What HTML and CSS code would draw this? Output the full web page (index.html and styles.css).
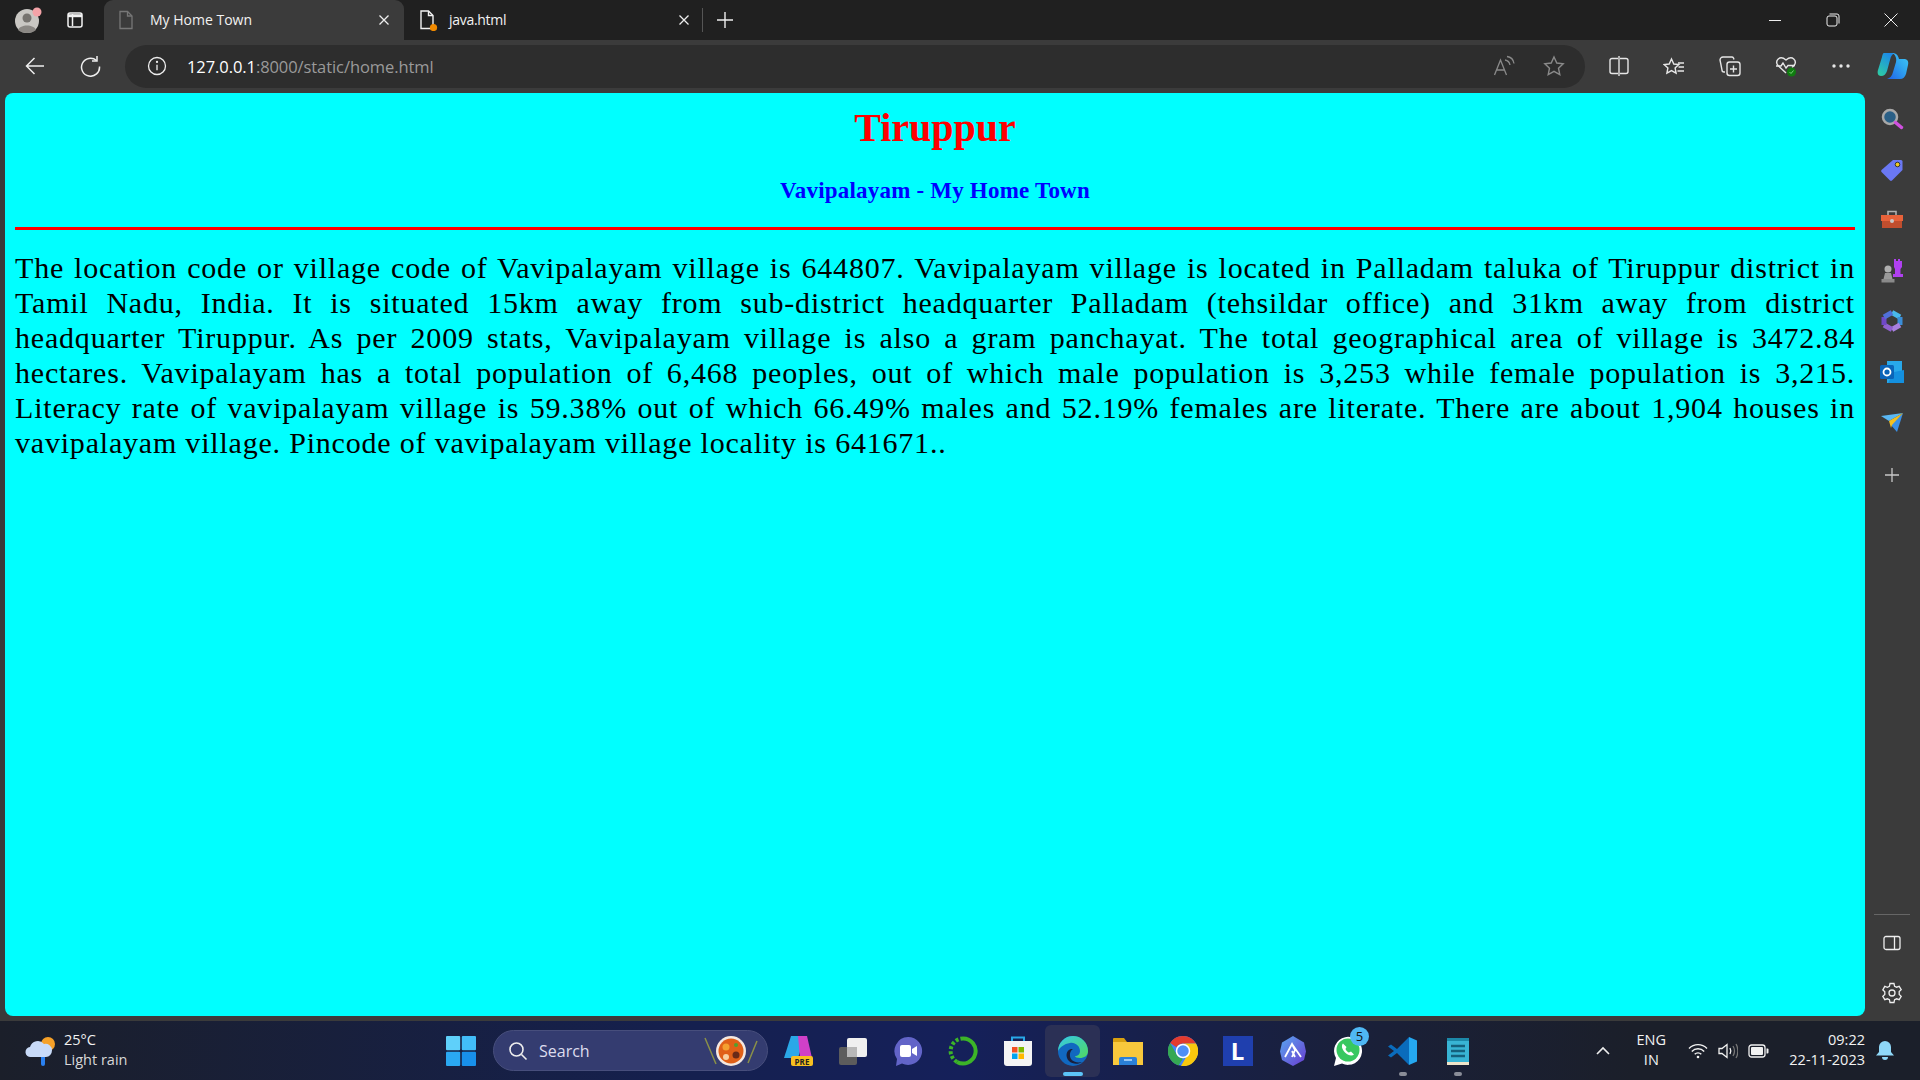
FILE: index.html
```html
<!DOCTYPE html>
<html lang="en">
<head>
    <meta charset="UTF-8">
    <title>My Home Town</title>
    <link rel="stylesheet" href="styles.css">
</head>
<body>
    <div class="tabbar">
        <div class="profile">
            <svg width="30" height="30" viewBox="0 0 30 30"><circle cx="14" cy="16" r="12" fill="#c9c7c3"/><circle cx="14" cy="13" r="4.5" fill="#76736f"/><path d="M5 25c2-6 16-6 18 0-4 4-14 4-18 0z" fill="#8b8884"/><circle cx="24" cy="7" r="4.5" fill="#f4a3a8"/></svg>
        </div>
        <div class="tabs-toggle">
            <svg width="18" height="18" viewBox="0 0 18 18" fill="none" stroke="#f2f2f2" stroke-width="1.5"><rect x="2" y="2" width="14" height="14" rx="2"/><path d="M6.5 3v12"/><path d="M2 4.7h14" stroke-width="3"/></svg>
        </div>
        <div class="tab tab-active">
            <svg width="16" height="20" viewBox="0 0 16 20" fill="none" stroke="#777" stroke-width="1.3"><path d="M2 1.5h7.5l4.5 4.5v12.500h-12z"/><path d="M9.5 1.5V6H14"/></svg>
            <span class="tab-title">My Home Town</span>
            <svg class="tab-close" width="12" height="12" viewBox="0 0 12 12" stroke="#eee" stroke-width="1.3"><path d="M1.5 1.5l9 9M10.5 1.5l-9 9"/></svg>
        </div>
        <div class="tab tab-other">
            <svg width="20" height="22" viewBox="0 0 20 22" fill="none" stroke="#f2f2f2" stroke-width="1.4"><path d="M3 2h7.5L15 6.500v13H3z"/><path d="M10.5 2v4.500H15"/><circle cx="15.5" cy="18.500" r="3.600" fill="#f08a00" stroke="none"/></svg>
            <span class="tab-title">java.html</span>
            <svg class="tab-close" width="12" height="12" viewBox="0 0 12 12" stroke="#eee" stroke-width="1.3"><path d="M1.5 1.5l9 9M10.5 1.5l-9 9"/></svg>
        </div>
        <div class="tab-divider"></div>
        <svg class="new-tab" width="18" height="18" viewBox="0 0 18 18" stroke="#eee" stroke-width="1.4"><path d="M9 1v16M1 9h16"/></svg>
        <div class="window-controls">
            <svg width="14" height="14" viewBox="0 0 14 14" stroke="#eee" stroke-width="1"><path d="M1 7.500h12"/></svg>
            <svg width="14" height="14" viewBox="0 0 14 14" fill="none" stroke="#eee" stroke-width="1"><rect x="1" y="3" width="10" height="10" rx="2"/><path d="M3.500 1H11a2 2 0 0 1 2 2v7.500"/></svg>
            <svg width="14" height="14" viewBox="0 0 14 14" stroke="#eee" stroke-width="1"><path d="M.5.5l13 13M13.500.5l-13 13"/></svg>
        </div>
    </div>

    <div class="toolbar">
        <svg class="nav-icon" width="22" height="22" viewBox="0 0 22 22" fill="none" stroke="#eee" stroke-width="1.5"><path d="M20 11H2.500M10.500 3l-8 8 8 8"/></svg>
        <svg class="nav-icon" width="22" height="22" viewBox="0 0 22 22" fill="none" stroke="#eee" stroke-width="1.5"><path d="M17.500 5.500a9 9 0 1 0 3 6"/><path d="M18 1v5h-5"/></svg>
        <div class="address-bar">
            <svg width="20" height="20" viewBox="0 0 20 20" fill="none" stroke="#eee" stroke-width="1.3"><circle cx="10" cy="10" r="8.500"/><path d="M10 8.800v5.500"/><circle cx="10" cy="5.900" r=".5"/></svg>
            <span class="url"><span class="url-host">127.0.0.1</span>:8000/static/home.html</span>
            <svg class="address-icon" width="22" height="22" viewBox="0 0 22 22" fill="none" stroke="#8a8a8a" stroke-width="1.3"><path d="M1.500 20l6-15 6 15M3.500 15h8"/><path d="M12 5c3 .5 4.500 2 5 5M14 1.500c4 .5 6.500 3.500 7 7"/></svg>
            <svg class="address-icon" width="22" height="22" viewBox="0 0 22 22" fill="none" stroke="#8a8a8a" stroke-width="1.4"><path d="M11 2l2.800 6 6.400.8-4.700 4.400 1.300 6.400-5.800-3.200-5.800 3.200 1.300-6.400-4.700-4.400L8.200 8z"/></svg>
        </div>
        <div class="toolbar-icons">
            <svg width="20" height="22" viewBox="0 0 20 22" fill="none" stroke="#e6e6e6" stroke-width="1.4"><path d="M9 3.500H3a2 2 0 0 0-2 2v11a2 2 0 0 0 2 2h6M11 3.500h6a2 2 0 0 1 2 2v11a2 2 0 0 1-2 2h-6"/><path d="M10 1v20"/></svg>
            <svg width="22" height="22" viewBox="0 0 22 22" fill="none" stroke="#e6e6e6" stroke-width="1.4"><path d="M8.500 2l2.300 5 5 .6-3.700 3.400 1 5.200-4.600-2.600-4.600 2.600 1-5.200-3.700-3.400 5-.6z" transform="translate(0 2)"/><path d="M15 8h6M15.500 12H21M14.500 16H21"/></svg>
            <svg width="22" height="22" viewBox="0 0 22 22" fill="none" stroke="#e6e6e6" stroke-width="1.4"><path d="M15 4.500L14.500 3a2 2 0 0 0-2-1H4a3 3 0 0 0-3 3l2 10a2 2 0 0 0 2 2h1"/><rect x="8" y="7" width="13" height="13.500" rx="2.500"/><path d="M14.500 10.500v7M11 14h7"/></svg>
            <svg width="22" height="22" viewBox="0 0 22 22" fill="none" stroke="#e6e6e6" stroke-width="1.4"><path d="M11 18l-8-7.500C-.5 6 4.500-.5 11 5c6.500-5.500 11.500 1 8 5.500l-2 2"/><path d="M1 11h5l2-3 3 5 2-2.500h7"/><circle cx="16.500" cy="17" r="4.500" fill="#107c10" stroke="none"/><path d="M14.500 17l1.500 1.500 2.500-3" stroke="#7ed07e" stroke-width="1"/></svg>
            <svg width="20" height="6" viewBox="0 0 20 6" fill="#e6e6e6"><circle cx="3" cy="3" r="1.700"/><circle cx="10" cy="3" r="1.700"/><circle cx="17" cy="3" r="1.700"/></svg>
        </div>
        <svg class="copilot" width="32" height="28" viewBox="0 0 32 28"><defs><linearGradient id="cop1" x1="0" y1="1" x2=".6" y2="0"><stop offset="0" stop-color="#2fd0a0"/><stop offset="1" stop-color="#1c8ae8"/></linearGradient><linearGradient id="cop2" x1="0" y1="1" x2="1" y2="0"><stop offset="0" stop-color="#2060e8"/><stop offset=".6" stop-color="#30a8f0"/><stop offset="1" stop-color="#40c8f8"/></linearGradient></defs><path d="M7 1h11c-3 1-4 3-5 7L10 19c-1 3-3 5-6 5-3 0-4-3-3-6L5 5c.4-2 1-4 2-4z" fill="url(#cop1)"/><path d="M15 1c4 0 6 2 7 6h5c3 0 5 2 4 6l-2 9c-1 3-3 5-6 5H10c3-1 5-3 6-7l3-10c1-4-1-8-4-9z" fill="url(#cop2)"/></svg>
    </div>

    <div class="workspace">
        <main class="page">
            <h1 class="town">Tiruppur</h1>
            <h2 class="subtitle">Vavipalayam - My Home Town</h2>
            <hr class="rule">
            <p class="about">
                <span>The location code or village code of Vavipalayam village is 644807. Vavipalayam village is located in Palladam taluka of Tiruppur district in</span>
                <span>Tamil Nadu, India. It is situated 15km away from sub-district headquarter Palladam (tehsildar office) and 31km away from district</span>
                <span>headquarter Tiruppur. As per 2009 stats, Vavipalayam village is also a gram panchayat. The total geographical area of village is 3472.84</span>
                <span>hectares. Vavipalayam has a total population of 6,468 peoples, out of which male population is 3,253 while female population is 3,215.</span>
                <span>Literacy rate of vavipalayam village is 59.38% out of which 66.49% males and 52.19% females are literate. There are about 1,904 houses in</span>
                <span>vavipalayam village. Pincode of vavipalayam village locality is 641671..</span>
            </p>
        </main>
        <aside class="sidebar">
            <svg width="24" height="24" viewBox="0 0 24 24" fill="none"><circle cx="10" cy="10" r="7" fill="#2a5f86" stroke="#a8a8a8" stroke-width="2.5"/><path d="M15.500 15.500l6 5" stroke="#d050e0" stroke-width="3.5" stroke-linecap="round"/></svg>
            <svg width="24" height="24" viewBox="0 0 24 24"><path d="M13 2h8a1.500 1.500 0 0 1 1.500 1.500V12L12 22.500a1.500 1.500 0 0 1-2 0L1.500 14a1.500 1.500 0 0 1 0-2z" fill="#6a78f4"/><circle cx="17.500" cy="6.500" r="2.300" fill="#f0c820" stroke="#333"/></svg>
            <svg width="24" height="24" viewBox="0 0 24 24"><path d="M8 7V3.500h8V7" fill="none" stroke="#b0b0b0" stroke-width="1.6"/><path d="M1 7h22v6H1z" fill="#e8623a"/><path d="M2 13h20v7H2z" fill="#c04e2e"/><circle cx="12" cy="13" r="2" fill="#c8c8c8"/></svg>
            <svg width="24" height="24" viewBox="0 0 24 24"><path d="M15 1h2v2h2V1h2v2h2v6l-1.500 2v5H24v3H14v-3h2v-5l-1-2z" fill="#b040f0" transform="translate(-1 -1)"/><circle cx="8" cy="10" r="3.500" fill="#b0b0b0"/><path d="M5 14h6l1.500 6h-9z" fill="#9a9a9a"/><path d="M1.500 20h13v3.500h-13z" fill="#8a8a8a"/></svg>
            <svg width="24" height="24" viewBox="0 0 24 24" fill="none" stroke-width="5"><path d="M12 3.500L20 8" stroke="#48b8ec"/><path d="M20 8v8" stroke="#3a8ed8"/><path d="M20 16l-8 4.500" stroke="#a880e0"/><path d="M12 20.500L4 16" stroke="#9060d0"/><path d="M4 16V8" stroke="#7048c8"/><path d="M4 8l8-4.500" stroke="#5070d8"/></svg>
            <svg width="24" height="24" viewBox="0 0 24 24"><path d="M7 1h15v20a2 2 0 0 1-2 2H7z" fill="#28a8ea"/><path d="M14 12l10-2v13H8z" fill="#1490df"/><rect y="5" width="14" height="14" rx="1.500" fill="#0a64b8"/><circle cx="7" cy="12" r="3.500" fill="none" stroke="#fff" stroke-width="1.8"/></svg>
            <svg width="24" height="24" viewBox="0 0 24 24"><path d="M1 6l22-3L9 11z" fill="#5ab8f4"/><path d="M23 3l-6 19-6-7z" fill="#3a90e8"/><path d="M9 11l14-8-11 12-1 3z" fill="#f4c020"/></svg>
            <svg class="side-plus" width="16" height="16" viewBox="0 0 16 16" stroke="#c8c8c8" stroke-width="1.3"><path d="M8 1v14M1 8h14"/></svg>
            <div class="side-bottom">
                <div class="side-line"></div>
                <svg width="18" height="16" viewBox="0 0 18 16" fill="none" stroke="#eee" stroke-width="1.3"><rect x="1" y="1.500" width="16" height="13" rx="2"/><path d="M11.500 1.500v13"/></svg>
                <svg class="side-gear" width="22" height="22" viewBox="0 0 22 22" fill="none" stroke="#eee" stroke-width="1.3"><circle cx="11" cy="11" r="3"/><path d="M9 1.500h4l.6 2.800 2 .9 2.600-.9 2 3.400-2 1.900v2.800l2 1.900-2 3.400-2.600-.9-2 .9-.6 2.800H9l-.6-2.800-2-.9-2.600.9-2-3.400 2-1.900V9.700l-2-1.900 2-3.400 2.600.9 2-.9z"/></svg>
            </div>
        </aside>
    </div>

    <footer class="taskbar">
        <div class="weather">
            <svg width="34" height="34" viewBox="0 0 34 34"><circle cx="24" cy="10" r="7" fill="#f5a028"/><path d="M17 21v9a2 2 0 0 0 4 0v-9z" fill="#2a80f0"/><path d="M7 23a5 5 0 0 1-1-10 8 8 0 0 1 14-3 6.500 6.500 0 0 1 8 6.500A6.500 6.500 0 0 1 22 23z" fill="#c8daf8"/></svg>
            <div class="weather-text">
                <span>25°C</span>
                <span class="weather-note">Light rain</span>
            </div>
        </div>
        <div class="task-start">
            <svg width="30" height="30" viewBox="0 0 30 30"><rect width="14.200" height="14.200" rx="1" fill="#5fd0fa"/><rect x="15.800" width="14.200" height="14.200" rx="1" fill="#42bdf8"/><rect y="15.800" width="14.200" height="14.200" rx="1" fill="#2aa8f2"/><rect x="15.800" y="15.800" width="14.200" height="14.200" rx="1" fill="#1890ea"/></svg>
        </div>
        <div class="search-box">
            <svg width="20" height="20" viewBox="0 0 20 20" fill="none" stroke="#eee" stroke-width="1.6"><circle cx="8.500" cy="8.500" r="6.500"/><path d="M13.500 13.500l5 5"/></svg>
            <span class="search-label">Search</span>
            <svg class="search-art" width="56" height="36" viewBox="0 0 56 36"><path d="M2 5l11 26M54 8l-9 22" stroke="#8a9048" stroke-width="1.5" fill="none"/><circle cx="28" cy="18" r="15" fill="#f4e8e0"/><circle cx="28" cy="18" r="12.500" fill="#e06018"/><circle cx="23" cy="14" r="3.500" fill="#f4a030"/><circle cx="33" cy="22" r="3.500" fill="#6a2a18"/><circle cx="33" cy="12" r="2" fill="#50a030"/><circle cx="23" cy="24" r="3" fill="#f8d0a0"/></svg>
        </div>
        <div class="task-apps">
            <div class="task-app">
                <svg width="30" height="32" viewBox="0 0 30 32"><path d="M8 1h14l-7 22H1z" fill="#2aa8e8"/><path d="M15 1h9l5 22H17z" fill="#d040c8"/><rect x="8" y="21" width="22" height="10" rx="2" fill="#f8c020"/><text x="19" y="29.500" class="pre-tag">PRE</text></svg>
            </div>
            <div class="task-app">
                <svg width="30" height="30" viewBox="0 0 30 30"><rect x="1" y="11" width="18" height="18" rx="2" fill="#5c5c5c"/><rect x="9" y="2" width="20" height="19" rx="2" fill="#f0f0f0"/><rect x="9" y="11" width="10" height="10" fill="#b8b8b8"/></svg>
            </div>
            <div class="task-app">
                <svg width="30" height="32" viewBox="0 0 30 32"><path d="M15 2a14 14 0 1 1-6 26.600L3 31l1-7A14 14 0 0 1 15 2z" fill="#6264c8"/><rect x="7" y="10" width="11" height="12" rx="2" fill="#fff"/><path d="M19 14l5-3v10l-5-3z" fill="#fff"/></svg>
            </div>
            <div class="task-app">
                <svg width="30" height="30" viewBox="0 0 30 30" fill="none"><path d="M15 2.500a12.500 12.500 0 1 1-6 23.400" stroke="#3cb428" stroke-width="4"/><path d="M9 25.900a12.500 12.500 0 0 1 6-23.400" stroke="#3cb428" stroke-width="4" stroke-dasharray="3 2"/></svg>
            </div>
            <div class="task-app">
                <svg width="30" height="32" viewBox="0 0 30 32"><path d="M9 6V2.500h12V6" fill="none" stroke="#28a8e8" stroke-width="2"/><path d="M1 6h28v22a3 3 0 0 1-3 3H4a3 3 0 0 1-3-3z" fill="#f4f4f4"/><rect x="9" y="12" width="5.500" height="5.500" fill="#f25022"/><rect x="15.500" y="12" width="5.500" height="5.500" fill="#7fba00"/><rect x="9" y="18.500" width="5.500" height="5.500" fill="#00a4ef"/><rect x="15.500" y="18.500" width="5.500" height="5.500" fill="#ffb900"/></svg>
            </div>
            <div class="task-app task-app-open">
                <svg width="32" height="32" viewBox="0 0 32 32"><defs><linearGradient id="edge1" x1="0" y1="0" x2="1" y2="1"><stop offset="0" stop-color="#36c8e8"/><stop offset="1" stop-color="#50d860"/></linearGradient></defs><circle cx="16" cy="16" r="15" fill="#1168c0"/><path d="M1 16a15 15 0 0 1 30 0c0 5-4 7-8 7-3 0-5-1-5-2 3 0 5-2 5-5 0-5-5-9-10-8C7 9 3 12 1 16z" fill="url(#edge1)"/><path d="M14 14c-5 1-6 8-2 12 3 3 9 4 13 1-4 1-9 0-11-3-2-4-1-8 2-10z" fill="#1b1f3a"/></svg>
                <span class="open-dot"></span>
            </div>
            <div class="task-app">
                <svg width="30" height="30" viewBox="0 0 30 30"><path d="M0 3a1 1 0 0 1 1-1h10l3 4H0z" fill="#d8a010"/><path d="M0 6h30v23H0z" fill="#f8c83c"/><path d="M6 29v-6a2 2 0 0 1 2-2h14a2 2 0 0 1 2 2v6z" fill="#2a80d8"/><path d="M11 24h8" stroke="#bfe0ff" stroke-width="1.5"/></svg>
            </div>
            <div class="task-app">
                <svg width="30" height="30" viewBox="0 0 30 30"><circle cx="15" cy="15" r="15" fill="#4285f4"/><path d="M15 0a15 15 0 0 1 13 7.500H15a7.500 7.500 0 0 0-6.500 3.750L2.200 7A15 15 0 0 1 15 0z" fill="#e33b2e"/><path d="M2.200 7l6.300 11.200a7.500 7.500 0 0 0 6.500 4.300l-4.500 7A15 15 0 0 1 2.200 7z" fill="#35a853"/><path d="M28 7.500A15 15 0 0 1 13 30l6.500-11.250a7.500 7.500 0 0 0 2-3.750 7.500 7.500 0 0 0-6.500-7.500z" fill="#f9c80e"/><circle cx="15" cy="15" r="6.500" fill="#4f8ff7" stroke="#fff" stroke-width="1.5"/></svg>
            </div>
            <div class="task-app">
                <div class="app-l">L</div>
            </div>
            <div class="task-app">
                <svg width="28" height="32" viewBox="0 0 28 32"><defs><linearGradient id="hex1" x1="0" y1="0" x2="1" y2="1"><stop offset="0" stop-color="#58a8f0"/><stop offset="1" stop-color="#6a3ad0"/></linearGradient></defs><path d="M14 1l11 6.500 2 9-2 8.500-11 6-11-6-2-8.500 2-9z" fill="url(#hex1)"/><path d="M6 22l7-13 3 6-3 7M16 22l-3-6M13 9l9 13" fill="none" stroke="#fff" stroke-width="1.8"/></svg>
            </div>
            <div class="task-app">
                <svg width="30" height="32" viewBox="0 0 30 32"><path d="M1 31l2-8A14 14 0 1 1 9 28.500z" fill="#fff"/><circle cx="15" cy="15" r="11.500" fill="#38c860"/><path d="M10 8.500c-2 2-1 6 2 9s7 4 9 2l-3-3-2 1c-1 0-3-2-3.500-3.500l1-2z" fill="#fff"/></svg>
                <span class="app-badge">5</span>
            </div>
            <div class="task-app">
                <svg width="30" height="30" viewBox="0 0 30 30"><path d="M21 1L9 13 3 8.500l-3 2L6 15l-6 4.500 3 2L9 17l12 12z" fill="#0a6cbc"/><path d="M21 1l8 3.500v21L21 29z" fill="#25a8f0"/></svg>
                <span class="run-dot"></span>
            </div>
            <div class="task-app">
                <svg width="24" height="32" viewBox="0 0 24 32"><path d="M1 3h22v27H1z" fill="#38b4d4"/><path d="M1 27h22v3H1z" fill="#f0e4c8"/><path d="M1 3h22v3H1z" fill="#1c88a8"/><path d="M5 11h14M5 16h14M5 21h14" stroke="#14607c" stroke-width="2.5"/></svg>
                <span class="run-dot"></span>
            </div>
        </div>
        <div class="tray">
            <svg class="tray-chevron" width="14" height="9" viewBox="0 0 14 9" fill="none" stroke="#eee" stroke-width="1.6"><path d="M1 8l6-6 6 6"/></svg>
            <div class="tray-lang"><span>ENG</span><span>IN</span></div>
            <div class="tray-icons">
                <svg width="20" height="16" viewBox="0 0 20 16" fill="none" stroke="#f2f2f2" stroke-width="1.4"><path d="M1 5.500a12.500 12.500 0 0 1 18 0M3.800 8.500a8.500 8.500 0 0 1 12.400 0M6.700 11.300a4.500 4.500 0 0 1 6.600 0"/><circle cx="10" cy="14" r="1.300" fill="#f2f2f2" stroke="none"/></svg>
                <svg width="20" height="18" viewBox="0 0 20 18" fill="none" stroke="#f2f2f2" stroke-width="1.3"><path d="M1 6.500h3l5-4v13l-5-4H1z"/><path d="M12 6c1 1.800 1 4.200 0 6"/><path d="M15 4c1.800 3 1.800 7 0 10M18 2c2.500 4 2.500 10 0 14" stroke="#777"/></svg>
                <svg width="21" height="14" viewBox="0 0 21 14" fill="none"><rect x="1" y="1" width="16" height="12" rx="2.500" stroke="#f2f2f2" stroke-width="1.3"/><rect x="3" y="3" width="12" height="8" rx="1" fill="#f2f2f2"/><path d="M18.500 4.500h1a1 1 0 0 1 1 1v3a1 1 0 0 1-1 1h-1z" fill="#f2f2f2"/></svg>
            </div>
            <div class="tray-clock"><span>09:22</span><span>22-11-2023</span></div>
            <svg class="tray-bell" width="18" height="20" viewBox="0 0 18 20" fill="#8fd8f8"><path d="M9 0a6 6 0 0 1 6 6v5l3 3.500H0L3 11V6a6 6 0 0 1 6-6z"/><path d="M6 16h6a3 3 0 0 1-6 0z"/></svg>
        </div>
    </footer>
</body>
</html>
```

FILE: styles.css
```css
* {
    box-sizing: border-box;
}
body {
    margin: 0;
    display: flex;
    flex-direction: column;
    height: 1080px;
    overflow: hidden;
    background-color: #3b3b3b;
    font-family: "Open Sans", "Noto Sans", sans-serif;
    color: #f2f2f2;
}
svg {
    display: block;
    flex-shrink: 0;
}

/* tab strip */
.tabbar {
    display: flex;
    align-items: center;
    height: 40px;
    background-color: #202020;
}
.profile {
    width: 56px;
    padding-left: 13px;
}
.tabs-toggle {
    width: 48px;
    padding-left: 10px;
}
.tab {
    display: flex;
    align-items: center;
    gap: 16px;
    width: 300px;
    height: 40px;
    padding: 0 14px;
    font-size: 14px;
}
.tab-title {
    margin-top: -2px;
}
.tab-other {
    gap: 11px;
}
.tab-other .tab-title {
    letter-spacing: -0.3px;
}
.tab-active {
    background-color: #3b3b3b;
    border-radius: 9px 9px 0 0;
}
.tab-close {
    margin-left: auto;
}
.tab-divider {
    width: 1px;
    height: 24px;
    background-color: #555;
    margin-left: -2px;
}
.new-tab {
    margin-left: 13px;
}
.window-controls {
    display: flex;
    gap: 44px;
    margin-left: auto;
    padding-right: 22px;
}

/* address row */
.toolbar {
    display: flex;
    align-items: center;
    height: 53px;
    padding-bottom: 1px;
    background-color: #3b3b3b;
}
.nav-icon {
    margin-left: 24px;
}
.nav-icon + .nav-icon {
    margin-left: 33px;
}
.address-bar {
    display: flex;
    align-items: center;
    width: 1460px;
    height: 43px;
    margin-left: 24px;
    padding: 0 20px 0 22px;
    border-radius: 22px;
    background-color: #2d2d2d;
}
.url {
    margin-left: 20px;
    font-size: 16.5px;
    letter-spacing: -0.08px;
    color: #9a9a9a;
}
.url-host {
    color: #fff;
}
.address-icon {
    margin-left: 28px;
}
.url + .address-icon {
    margin-left: auto;
}
.toolbar-icons {
    display: flex;
    align-items: center;
    gap: 34px;
    margin-left: 24px;
}
.copilot {
    margin-left: 26px;
}

/* page itself */
.workspace {
    display: flex;
    height: 923px;
}
.page {
    width: 1860px;
    margin-left: 5px;
    padding: 8px 10px;
    background-color: #00ffff;
    border-radius: 8px;
    color: #000;
    font-family: "Liberation Serif", serif;
}
.town {
    margin: 4px 0 0;
    font-size: 40px;
    line-height: 46px;
    text-align: center;
    color: #ff0000;
}
.subtitle {
    margin: 27px 0 0;
    font-size: 23px;
    line-height: 26px;
    letter-spacing: 0.2px;
    text-align: center;
    color: #0000ff;
}
.rule {
    height: 3px;
    margin: 23px 0 0;
    border: none;
    background-color: #ff0000;
}
.about {
    margin: 20px 0 0;
    font-size: 30px;
    line-height: 35px;
    letter-spacing: 0.8px;
}
.about span {
    display: block;
    text-align: justify;
    text-align-last: justify;
}
.about span:last-child {
    text-align-last: left;
}

/* right rail */
.sidebar {
    flex: 1;
    display: flex;
    flex-direction: column;
    align-items: center;
    gap: 26.5px;
    padding-top: 14px;
    padding-right: 2px;
}
.side-plus {
    margin-top: 6px;
}
.side-bottom {
    display: flex;
    flex-direction: column;
    align-items: center;
    margin-top: auto;
    padding-bottom: 12px;
}
.side-line {
    width: 36px;
    height: 1px;
    margin-bottom: 20px;
    background-color: #666;
}
.side-gear {
    margin-top: 31px;
}

/* windows taskbar */
.taskbar {
    display: flex;
    align-items: center;
    height: 59px;
    margin-top: 5px;
    background: linear-gradient(90deg, #1b1f2a 0%, #15204e 35%, #15205a 50%, #1a2038 72%, #1b1f2a 85%);
    font-size: 14.5px;
}
.weather {
    display: flex;
    align-items: center;
    gap: 6px;
    width: 433px;
    padding-left: 24px;
}
.weather-text {
    display: flex;
    flex-direction: column;
    margin-top: -2px;
    line-height: 20px;
}
.weather-note {
    color: #d8d8d8;
}
.task-start {
    display: flex;
    justify-content: center;
    width: 55px;
}
.search-box {
    display: flex;
    align-items: center;
    width: 275px;
    height: 41px;
    margin-left: 5px;
    padding: 0 6px 0 14px;
    border-radius: 21px;
    background-color: #343c70;
    border: 1px solid #474e7c;
}
.search-label {
    margin-left: 11px;
    font-size: 16px;
    color: #dde;
}
.search-art {
    margin-left: auto;
    margin-right: 2px;
}
.task-apps {
    display: flex;
    margin-left: 2px;
}
.task-app {
    position: relative;
    display: flex;
    align-items: center;
    justify-content: center;
    width: 55px;
    height: 52px;
}
.task-app-open {
    background-color: #2b3055;
    border-radius: 6px;
}
.pre-tag {
    font-size: 8px;
    font-weight: 700;
    fill: #222;
    text-anchor: middle;
}
.app-l {
    width: 30px;
    height: 30px;
    background-color: #1f3fae;
    color: #fff;
    font-size: 24px;
    font-weight: 700;
    line-height: 30px;
    text-align: center;
}
.app-badge {
    position: absolute;
    top: 2px;
    right: 6px;
    width: 19px;
    height: 19px;
    border-radius: 50%;
    background-color: #4fb8f4;
    color: #111;
    font-size: 13px;
    line-height: 19px;
    text-align: center;
}
.open-dot {
    position: absolute;
    bottom: 1px;
    left: 18px;
    width: 20px;
    height: 4px;
    border-radius: 2px;
    background-color: #5cc4f8;
}
.run-dot {
    position: absolute;
    bottom: 1px;
    left: 24px;
    width: 8px;
    height: 4px;
    border-radius: 2px;
    background-color: #8a8d98;
}
.tray {
    display: flex;
    align-items: center;
    margin-left: auto;
    padding-right: 26px;
}
.tray-lang {
    display: flex;
    flex-direction: column;
    align-items: center;
    width: 40px;
    margin-top: -2px;
    margin-left: 21px;
    line-height: 20px;
}
.tray-icons {
    display: flex;
    align-items: center;
    gap: 10px;
    margin-left: 17px;
}
.tray-clock {
    display: flex;
    flex-direction: column;
    align-items: flex-end;
    margin-top: -2px;
    margin-left: 20px;
    line-height: 20px;
}
.tray-bell {
    margin-left: 11px;
}
```
